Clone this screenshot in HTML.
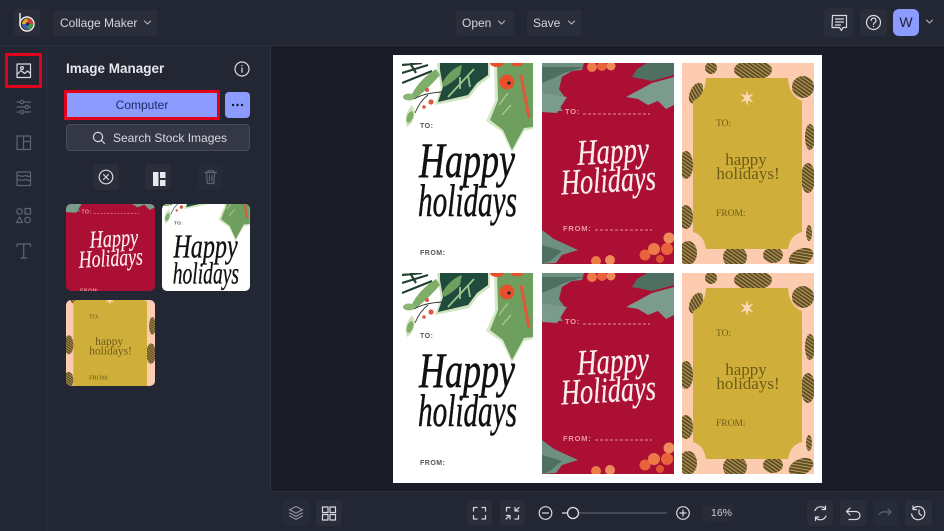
<!DOCTYPE html>
<html><head><meta charset="utf-8"><style>
*{box-sizing:border-box}
html,body{margin:0;padding:0;width:944px;height:531px;overflow:hidden;background:#232633}
body{position:relative;font-family:"Liberation Sans",sans-serif;color:#d8dae2}
.a{position:absolute}
.btn{position:absolute;background:#2a2d3a;border-radius:4px}
.t{position:absolute;white-space:nowrap;font-size:12px;line-height:16px;color:#d5d7df}
svg{position:absolute;left:0;top:0;overflow:hidden}
.ic{fill:none;stroke:#d8dae2;stroke-width:1.2;stroke-linecap:round;stroke-linejoin:round}
.dim{stroke:#5f6475}
.chev{stroke:#b4b7c2;stroke-width:1.1}
.s1{font-family:"Liberation Serif",serif;font-style:italic;fill:#111;stroke:#111;stroke-width:.5}
.s2{font-family:"Liberation Serif",serif;font-style:italic;fill:#fbeef0;stroke:#fbeef0;stroke-width:.3}
.g{font-family:"Liberation Serif",serif;fill:#6f5c16}
.soft{filter:blur(.35px)}
</style></head><body>
<div class="a" style="left:270px;top:46px;width:674px;height:445px;background:#1a1c28"></div>
<div class="a" style="left:0;top:45px;width:944px;height:1px;background:#2e3140"></div>
<div class="a" style="left:46px;top:46px;width:1px;height:485px;background:#2e3140"></div>
<div class="a" style="left:270px;top:46px;width:1px;height:445px;background:#2e3140"></div>
<div class="a" style="left:270px;top:491px;width:674px;height:1px;background:#2e3140"></div>

<div class="btn" style="left:14px;top:9px;width:26px;height:27px"></div>
<div class="btn" style="left:53px;top:10px;width:105px;height:26px"></div>
<div class="t" style="left:60px;top:15px">Collage Maker</div>
<div class="btn" style="left:456px;top:10px;width:58px;height:26px"></div>
<div class="t" style="left:462px;top:15px">Open</div>
<div class="btn" style="left:527px;top:10px;width:55px;height:26px"></div>
<div class="t" style="left:533px;top:15px">Save</div>
<div class="btn" style="left:824px;top:8px;width:29px;height:29px"></div>
<div class="btn" style="left:860px;top:9px;width:27px;height:27px"></div>
<div class="a" style="left:893px;top:9px;width:26px;height:27px;background:#8b9bff;border-radius:6px;color:#1d2030;font-size:14px;line-height:27px;text-align:center">W</div>

<div class="a" style="left:5px;top:53px;width:37px;height:35px;border:3px solid #e2001a"></div>
<div class="t" style="left:66px;top:61px;font-size:13.5px;font-weight:bold;color:#e6e7ec">Image Manager</div>
<div class="a" style="left:64px;top:90px;width:156px;height:30px;background:#8b9bff;border:3px solid #e2001a;color:#1f2a63;font-size:12px;line-height:24px;text-align:center">Computer</div>
<div class="a" style="left:225px;top:92px;width:25px;height:26px;background:#8b9bff;border-radius:4px"></div>
<div class="a" style="left:66px;top:124px;width:184px;height:27px;background:#343846;border:1px solid #464a59;border-radius:4px"></div>
<div class="t" style="left:113px;top:130px;color:#d8dae2">Search Stock Images</div>
<div class="btn" style="left:93px;top:164px;width:26px;height:26px"></div>
<div class="btn" style="left:145px;top:164px;width:26px;height:26px"></div>
<div class="btn" style="left:197px;top:164px;width:26px;height:26px;background:#272a37"></div>

<div class="btn" style="left:283px;top:500px;width:26px;height:26px;background:#272a37"></div>
<div class="btn" style="left:316px;top:500px;width:26px;height:26px"></div>
<div class="btn" style="left:467px;top:500px;width:25px;height:26px"></div>
<div class="btn" style="left:500px;top:500px;width:25px;height:26px"></div>
<div class="a" style="left:703px;top:505px;width:32px;height:16px;background:#282b38;border-radius:2px;color:#c8cad3;font-size:10.5px;line-height:16px;text-align:right;padding-right:3px">16%</div>
<div class="btn" style="left:807px;top:500px;width:26px;height:26px"></div>
<div class="btn" style="left:840px;top:500px;width:26px;height:26px"></div>
<div class="btn" style="left:873px;top:500px;width:26px;height:26px;background:#272a37"></div>
<div class="btn" style="left:905px;top:500px;width:27px;height:26px"></div>

<svg width="944" height="531" viewBox="0 0 944 531" xmlns="http://www.w3.org/2000/svg">
<defs>
<pattern id="cone" width="3" height="3" patternUnits="userSpaceOnUse" patternTransform="rotate(35)"><rect width="3" height="3" fill="#b59a66"/><rect width="3" height="1.9" fill="#5f4c1c"/></pattern>
<clipPath id="cc"><rect width="132" height="201"/></clipPath>
<clipPath id="t1"><rect x="66" y="204" width="89" height="87" rx="5"/></clipPath>
<clipPath id="t2"><rect x="162" y="204" width="88" height="87" rx="5"/></clipPath>
<clipPath id="t3"><rect x="66" y="300" width="89" height="86" rx="5"/></clipPath>

<g id="art1" clip-path="url(#cc)">
<rect width="132" height="201" fill="#fff"/>
<path d="M92 0H131V66L122 68L110 90L100 69L84 58L93 38Z" fill="#d6e8c8"/>
<path d="M95 0H131V64L122 65L110 87L101 67L88 57L96 37Z" fill="#6f9f5e"/>
<path d="M119 12L127 55" stroke="#e0573a" stroke-width="3" fill="none"/>
<path d="M106 30L97 42M109 42L100 52" stroke="#a8c890" stroke-width="1.4" fill="none"/>
<circle cx="105" cy="19" r="7.5" fill="#e8502c"/><circle cx="107" cy="20" r="1.6" fill="#222"/>
<ellipse cx="95" cy="0" rx="7" ry="4" fill="#e8502c"/><ellipse cx="115" cy="0" rx="6" ry="3.5" fill="#e8502c"/>
<path d="M35 0H88V14L76 23L67 35L33 42L39 25L36 8Z" fill="#cfe4bd"/>
<path d="M38 0H86V12L75 20L66 32L36 39L41 24L38 7Z" fill="#1f4a3c"/>
<path d="M72 6L46 34M58 14L58 26M66 12L68 24" stroke="#9cc58c" stroke-width="1.8" fill="none"/>
<path d="M40 20Q48 6 60 2L58 12Q50 20 42 24Z" fill="#6f9f5e"/>
<path d="M0 2L20 0M0 10L26 2M0 20L30 8M8 0L14 10" stroke="#22402f" stroke-width="2.2" fill="none"/>
<path d="M10 31Q18 16 34 6L38 12Q26 26 14 35Z" fill="#7fae69"/>
<ellipse cx="7" cy="34" rx="6" ry="3.5" fill="#8cb676"/>
<path d="M12 36Q22 30 40 29M26 32Q18 38 13 50" stroke="#333" stroke-width=".9" fill="none"/>
<circle cx="25" cy="27" r="2" fill="#d9583e"/><circle cx="29" cy="39" r="2.6" fill="#d9583e"/><circle cx="22" cy="44" r="1.8" fill="#d9583e"/>
<path d="M5 64Q1 52 10 42L13 48Q12 60 5 64Z" fill="#cfe4bd"/><ellipse cx="8" cy="54" rx="3" ry="6" fill="#7fae69" transform="rotate(20 8 54)"/>
</g>

<g id="art2" clip-path="url(#cc)">
<rect width="132" height="201" fill="#ab0f33"/>
<path d="M0 0H42L40 7L30 8L20 14L17 26L22 33L15 40L21 48H0Z" fill="#6f8f80"/>
<path d="M0 4H42L22 10L12 15L0 20Z" fill="#4f6f62"/>
<path d="M0 30L25 34L15 50L0 49Z" fill="#7b9b8c"/>
<path d="M132 0V12L110 18L90 14L95 6L105 0Z" fill="#4f6f62"/>
<path d="M132 14L110 20L84 34L96 36L106 42L116 38L124 46L132 42Z" fill="#7b9b8c"/>
<circle cx="50" cy="4" r="5" fill="#ee7a48"/><circle cx="60" cy="3" r="5" fill="#e8633b"/><circle cx="69" cy="3" r="4.5" fill="#ee8a5c"/>
<path d="M0 167L12 176L36 187L20 192L14 200L0 201Z" fill="#6f8f80"/><path d="M0 182L20 188L8 198L0 201Z" fill="#4f6f62"/>
<circle cx="54" cy="198" r="5" fill="#ee7a48"/><circle cx="68" cy="197" r="5" fill="#ee8a5c"/>
<circle cx="103" cy="192" r="5.500" fill="#e8633b"/><circle cx="112" cy="186" r="6" fill="#ee7a48"/>
<circle cx="125" cy="186" r="6" fill="#e8633b"/><circle cx="127" cy="175" r="5.500" fill="#ee8a5c"/><circle cx="118" cy="196" r="4" fill="#dd5533"/>
<path d="M41 51H108M53 167H110" stroke="#e88f96" stroke-width="1" stroke-dasharray="3 2" fill="none"/>
</g>

<g id="art3" clip-path="url(#cc)">
<rect width="132" height="201" fill="#fccbb0"/>
<ellipse cx="71" cy="7" rx="19" ry="10" fill="url(#cone)"/>
<ellipse cx="121" cy="24" rx="11" ry="11" fill="url(#cone)"/>
<ellipse cx="14" cy="30" rx="6" ry="11" fill="url(#cone)" transform="rotate(25 14 30)"/>
<ellipse cx="29" cy="5" rx="6" ry="6" fill="url(#cone)"/>
<ellipse cx="128" cy="74" rx="5" ry="13" fill="url(#cone)"/>
<ellipse cx="4" cy="102" rx="7" ry="14" fill="url(#cone)"/>
<ellipse cx="126" cy="115" rx="7" ry="15" fill="url(#cone)"/>
<ellipse cx="4" cy="154" rx="7" ry="12" fill="url(#cone)"/>
<ellipse cx="6" cy="190" rx="9" ry="12" fill="url(#cone)"/>
<ellipse cx="53" cy="194" rx="12" ry="11" fill="url(#cone)"/>
<ellipse cx="91" cy="192" rx="10" ry="8" fill="url(#cone)"/>
<ellipse cx="119" cy="194" rx="13" ry="8" fill="url(#cone)" transform="rotate(-25 119 194)"/>
<ellipse cx="127" cy="170" rx="3" ry="8" fill="url(#cone)"/>
<path d="M24 15H106Q107 33 120 38V169Q108 172 106 186H24Q22 172 11 169V38Q23 33 24 15Z" fill="#cfae3a"/>
<path d="M65 27L66.300 32.500L71.500 30.500L67.500 35L71.500 39.500L66.300 37.500L65 43L63.700 37.500L58.500 39.500L62.500 35L58.500 30.500L63.700 32.500Z" fill="#fcd9bd"/>
</g>
</defs>

<rect x="393" y="55" width="429" height="428" fill="#fff"/>

<!-- card 1 row 1 -->
<g transform="translate(402 63)"><use href="#art1" class="soft"/>
<text x="18" y="65" font-size="7" font-weight="bold" fill="#555" letter-spacing=".5">TO:</text>
<text x="17" y="114" class="s1" font-size="50" textLength="96" lengthAdjust="spacingAndGlyphs">Happy</text>
<text x="16" y="153" class="s1" font-size="46" textLength="99" lengthAdjust="spacingAndGlyphs">holidays</text>
<text x="18" y="192" font-size="7" font-weight="bold" fill="#555" letter-spacing=".5">FROM:</text></g>
<!-- card 2 row 1 -->
<g transform="translate(542 63)"><use href="#art2" class="soft"/>
<text x="23" y="51" font-size="7.5" font-weight="bold" fill="#ec9aa0" letter-spacing=".8">TO:</text>
<text x="35" y="100" class="s2" font-size="36" textLength="72" lengthAdjust="spacingAndGlyphs" transform="rotate(-3 70 90)">Happy</text>
<text x="19" y="129" class="s2" font-size="36" textLength="95" lengthAdjust="spacingAndGlyphs" transform="rotate(-3 66 120)">Holidays</text>
<text x="21" y="168" font-size="7.5" font-weight="bold" fill="#ec9aa0" letter-spacing=".8">FROM:</text></g>
<!-- card 3 row 1 -->
<g transform="translate(682 63)"><use href="#art3" class="soft"/>
<text x="34" y="63" class="g" font-size="9.5">TO:</text>
<text x="64" y="102" text-anchor="middle" class="g" font-size="17">happy</text>
<text x="66" y="116" text-anchor="middle" class="g" font-size="17">holidays!</text>
<text x="34" y="153" class="g" font-size="9.5">FROM:</text></g>

<!-- row 2 -->
<g transform="translate(402 273)"><use href="#art1" class="soft"/>
<text x="18" y="65" font-size="7" font-weight="bold" fill="#555" letter-spacing=".5">TO:</text>
<text x="17" y="114" class="s1" font-size="50" textLength="96" lengthAdjust="spacingAndGlyphs">Happy</text>
<text x="16" y="153" class="s1" font-size="46" textLength="99" lengthAdjust="spacingAndGlyphs">holidays</text>
<text x="18" y="192" font-size="7" font-weight="bold" fill="#555" letter-spacing=".5">FROM:</text></g>
<g transform="translate(542 273)"><use href="#art2" class="soft"/>
<text x="23" y="51" font-size="7.5" font-weight="bold" fill="#ec9aa0" letter-spacing=".8">TO:</text>
<text x="35" y="100" class="s2" font-size="36" textLength="72" lengthAdjust="spacingAndGlyphs" transform="rotate(-3 70 90)">Happy</text>
<text x="19" y="129" class="s2" font-size="36" textLength="95" lengthAdjust="spacingAndGlyphs" transform="rotate(-3 66 120)">Holidays</text>
<text x="21" y="168" font-size="7.5" font-weight="bold" fill="#ec9aa0" letter-spacing=".8">FROM:</text></g>
<g transform="translate(682 273)"><use href="#art3" class="soft"/>
<text x="34" y="63" class="g" font-size="9.5">TO:</text>
<text x="64" y="102" text-anchor="middle" class="g" font-size="17">happy</text>
<text x="66" y="116" text-anchor="middle" class="g" font-size="17">holidays!</text>
<text x="34" y="153" class="g" font-size="9.5">FROM:</text></g>

<!-- thumbnails -->
<g clip-path="url(#t1)"><g transform="translate(66 179) scale(.675)"><use href="#art2"/>
<text x="23" y="51" font-size="7.5" font-weight="bold" fill="#ec9aa0" letter-spacing=".8">TO:</text>
<text x="35" y="100" class="s2" font-size="36" textLength="72" lengthAdjust="spacingAndGlyphs" transform="rotate(-3 70 90)">Happy</text>
<text x="19" y="129" class="s2" font-size="36" textLength="95" lengthAdjust="spacingAndGlyphs" transform="rotate(-3 66 120)">Holidays</text>
<text x="21" y="168" font-size="7.5" font-weight="bold" fill="#ec9aa0" letter-spacing=".8">FROM:</text></g></g>
<g clip-path="url(#t2)"><g transform="translate(162 181) scale(.67)"><use href="#art1"/>
<text x="18" y="65" font-size="7" font-weight="bold" fill="#555" letter-spacing=".5">TO:</text>
<text x="17" y="114" class="s1" font-size="50" textLength="96" lengthAdjust="spacingAndGlyphs">Happy</text>
<text x="16" y="153" class="s1" font-size="46" textLength="99" lengthAdjust="spacingAndGlyphs">holidays</text></g></g>
<g clip-path="url(#t3)"><g transform="translate(66 276) scale(.675)"><use href="#art3"/>
<text x="34" y="63" class="g" font-size="9.5">TO:</text>
<text x="64" y="102" text-anchor="middle" class="g" font-size="17">happy</text>
<text x="66" y="116" text-anchor="middle" class="g" font-size="17">holidays!</text>
<text x="34" y="153" class="g" font-size="9.5">FROM:</text></g></g>

<!-- logo -->
<path d="M20 13V26" stroke="#f2f2f2" stroke-width="1.4" fill="none"/>
<circle cx="27" cy="24" r="7" fill="none" stroke="#f4efe6" stroke-width="1.4"/>
<circle cx="27.500" cy="24" r="5.500" fill="#e0a52c"/>
<path d="M27.500 24V18.500A5.500 5.500 0 0 1 33 24Z" fill="#d23c3c"/><path d="M27.500 24H33A5.500 5.500 0 0 1 27.500 29.500Z" fill="#3c9a5a"/><path d="M27.500 24V29.500A5.500 5.500 0 0 1 22 24Z" fill="#3c5cc0"/>
<circle cx="27.500" cy="24" r="1.600" fill="#2a2d3a"/>

<g class="ic chev">
<path d="M144.500 21l3 3 3-3M498.500 21l3 3 3-3M568.500 21l3 3 3-3M926.500 20l3 3 3-3"/>
</g>
<g class="ic">
<!-- comment -->
<path d="M832.500 15.500h14v12h-3.500l-1.500 3-2-3h-7.500zM835.500 19h8M835.500 22h8M835.500 25h5"/>
<!-- help -->
<circle cx="873.500" cy="22.500" r="7"/><path d="M871.200 20.500a2.400 2.400 0 1 1 3.500 2.100c-.9.500-1.200 1-1.200 1.800M873.500 26.300v.2"/>
<!-- rail image icon -->
<path d="M17 64h13.500v13.500H17zM17 74.500l4-4 3.500 3 3-2.500 3 2.500"/><circle cx="22" cy="68" r="1.400"/>
<!-- info -->
<circle cx="242" cy="69" r="7"/><path d="M242 68v4.200M242 65.500v.3"/>
<!-- search -->
<circle cx="98" cy="137" r="4.600"/><path d="M101.500 140.500l3 3"/>
<!-- x circle -->
<circle cx="106" cy="177" r="6.800"/><path d="M103.500 174.500l5 5M108.500 174.500l-5 5"/>
</g>
<g class="ic dim">
<path d="M17 102h13.500M17 107h13.500M17 112h13.500"/><circle cx="22" cy="102" r="1.700" fill="#232633"/><circle cx="27" cy="107" r="1.700" fill="#232633"/><circle cx="22" cy="112" r="1.700" fill="#232633"/>
<path d="M17 136h13.500v13.500H17zM23.500 136v13.500M23.500 141.500h7"/>
<path d="M17 172h13.500v13.500H17zM17 176c2-1.500 4.500 1.500 6.700 0s4.500 1.500 6.800 0M17 180c2-1.500 4.500 1.500 6.700 0s4.500 1.500 6.800 0"/>
<circle cx="19.500" cy="211.500" r="2.800"/><rect x="25" y="208.500" width="5.500" height="5.500"/><path d="M19.500 217l3 5.500h-6z"/><circle cx="27.500" cy="220" r="2.800"/>
<path d="M17 246.500v-2.500h13.500v2.500M23.700 244v14M21 258h5.500"/>
<path d="M205 172.500h11.500M208 172.500v-1.700h5.500v1.700M206.500 172.500l.8 11h6.500l.8-11M209.500 175.500v5.500M212 175.500v5.500"/>
<path d="M296 506.500l6.500 3.300-6.500 3.300-6.500-3.300zM289.500 513l6.500 3.300 6.500-3.300M289.500 516l6.500 3.300 6.500-3.300" stroke="#8a8e9c"/>
<path d="M879 513.500q3-3.500 7-2.500h5l-3-3M891 511l-3 3" transform="translate(0 1)"/>
</g>
<g class="ic">
<!-- tiles -->
<path d="M153 172h5.500v14H153zM160 172h5.500v6H160zM160 180h5.500v6H160z" fill="#e8e9ee" stroke="none"/>
<!-- grid -->
<path d="M322.500 507h5.500v5.500h-5.500zM330 507h5.500v5.500H330zM322.500 514.500h5.500v5.500h-5.500zM330 514.500h5.500v5.500H330z"/>
<!-- fullscreen -->
<path d="M473.500 511v-3.500h3.500M482 507.500h3.500v3.500M473.500 515.500v3.500h3.500M482 519h3.500v-3.500"/>
<!-- shrink -->
<path d="M506.500 511v-3.500h3.500M506.500 515.500h3.500M506 519l4-3.500M510 519v-3.500M519 507.500l-4 3.500M515 507.500v3.500h3.500M515 519h3.500v-3.500"/>
<!-- minus -->
<circle cx="545.500" cy="513" r="6.300"/><path d="M542.500 513h6"/>
<!-- plus -->
<circle cx="683" cy="513" r="6.300"/><path d="M680 513h6M683 510v6"/>
<!-- sync -->
<path d="M815 510.500a6.200 6.200 0 0 1 10.500-1.500M826 516a6.200 6.200 0 0 1-10.500 1.500M825.500 506v3.500H822M815.500 520.500V517H819"/>
<!-- undo -->
<path d="M847 511.500h9a4 4 0 0 1 0 8h-7M850 508l-3.500 3.500 3.500 3.500"/>
<!-- history -->
<path d="M913 509a6.600 6.600 0 1 1-1.400 5M913 506v3.500h3.500M919 510v3.500l2.500 2"/>
</g>
<path d="M562 513h5" stroke="#d8dae2" stroke-width="1.300"/>
<path d="M579 513h88" stroke="#5b5f6e" stroke-width="1.300"/>
<circle cx="573" cy="513" r="5.500" fill="#232633" stroke="#e0e1e7" stroke-width="1.300"/>
<circle cx="233" cy="105" r="1.200" fill="#11152e"/><circle cx="237.500" cy="105" r="1.200" fill="#11152e"/><circle cx="242" cy="105" r="1.200" fill="#11152e"/>
</svg>
</body></html>
